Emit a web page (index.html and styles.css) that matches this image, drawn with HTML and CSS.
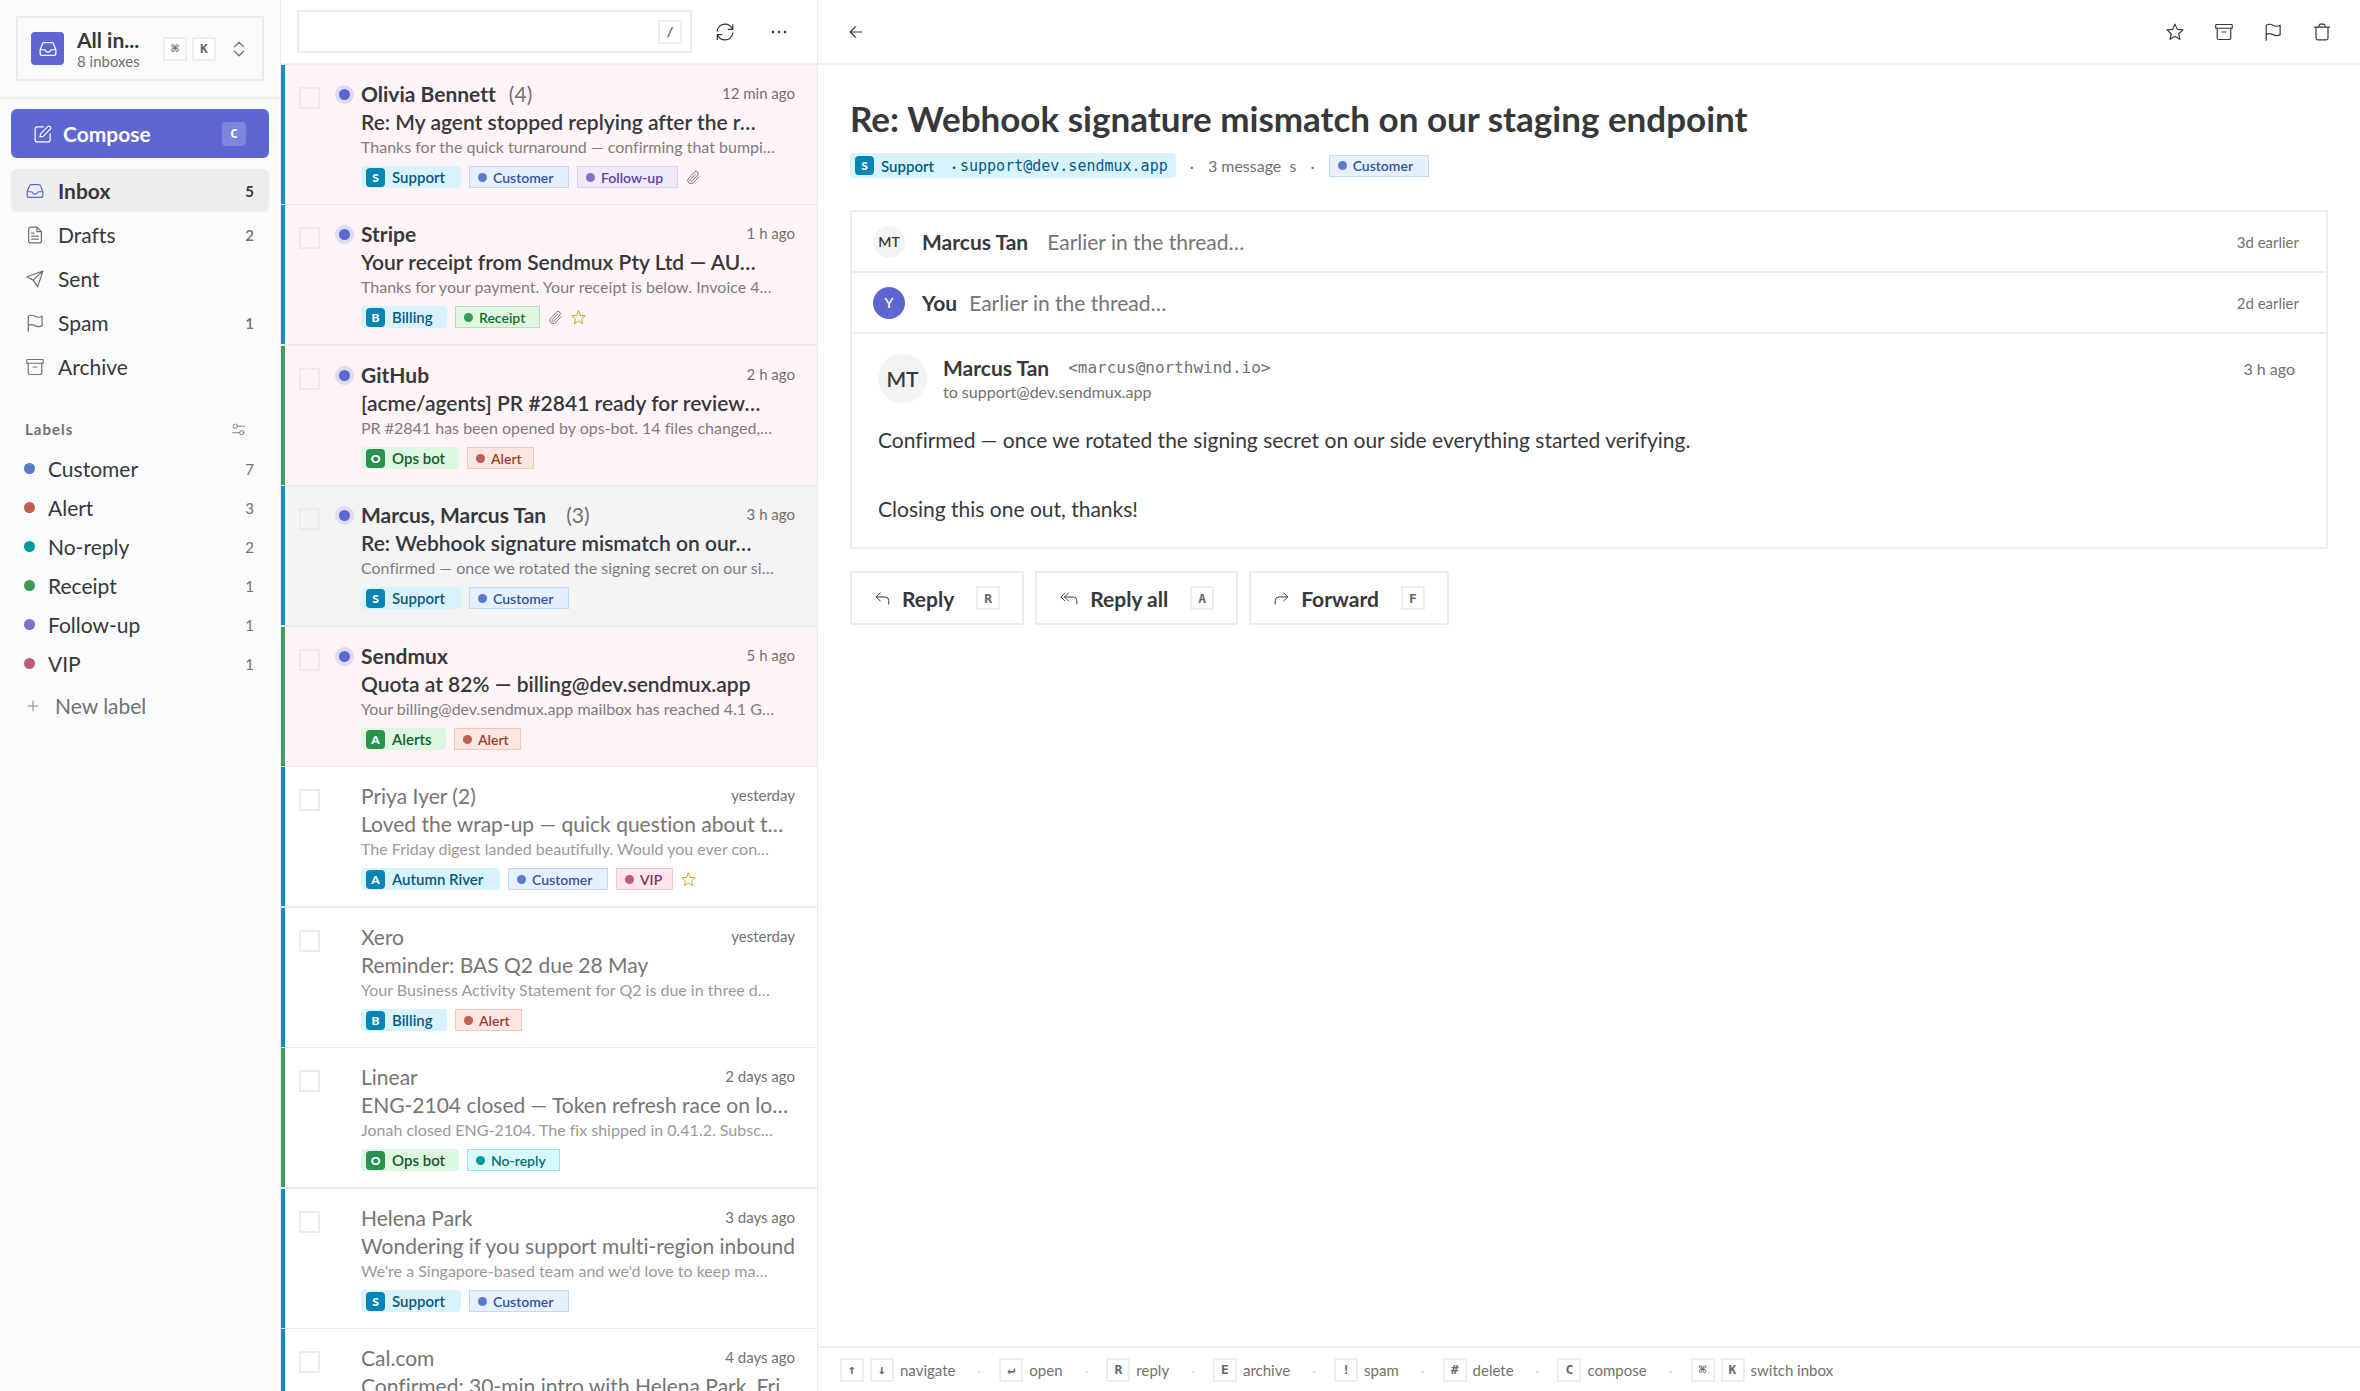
FILE: index.html
```html
<!DOCTYPE html>
<html lang="en">
  <head>
    <meta charset="UTF-8" />
    <meta name="viewport" content="width=device-width, initial-scale=1.0" />
    <title>Inbox - Sendmux</title>
    <link rel="stylesheet" href="styles.css">
  </head>
  <body>
    <!-- Icon sprite -->
    <svg class="sprite" aria-hidden="true">
      <symbol id="i-inbox" viewBox="0 0 24 24"><path d="M1.5 13v4.5a3 3 0 0 0 3 3h15a3 3 0 0 0 3-3V13L19.6 5.600a3 3 0 0 0-2.800-2.100H7.200a3 3 0 0 0-2.800 2.100L1.500 13h5.300a2 2 0 0 1 1.800 1.100c.600 1.300 1.700 2.100 3.400 2.100s2.800-.800 3.400-2.100a2 2 0 0 1 1.800-1.100h5.300" /></symbol>
      <symbol id="i-compose" viewBox="0 0 24 24"><path d="M12.500 2.500H4.500a3 3 0 0 0-3 3v14a3 3 0 0 0 3 3h14a3 3 0 0 0 3-3v-8M8 16l.700-4.200L18.300 2.200a2.300 2.300 0 0 1 3.400 3.400L12.200 15.200z" /></symbol>
      <symbol id="i-file" viewBox="0 0 24 24"><path d="M14.500 1.500h-8a3 3 0 0 0-3 3v15a3 3 0 0 0 3 3h11a3 3 0 0 0 3-3v-12zM14.500 1.500v6h6M7.500 9.500h3M7.500 13.500h9M7.500 17.500h9" /></symbol>
      <symbol id="i-send" viewBox="0 0 24 24"><path d="M22.500 1.500 1 9l8.500 4.500L15.500 22.500zM22.500 1.500l-13 12" /></symbol>
      <symbol id="i-flag" viewBox="0 0 24 24"><path d="M3 23V3c2.500-1.800 5.500-1.800 9 0s6.500 1.800 9.500 0v12.500c-3 1.800-6 1.800-9.500 0s-6.500-1.800-9 0" /></symbol>
      <symbol id="i-archive" viewBox="0 0 24 24"><path d="M2 2h20a1 1 0 0 1 1 1v4H1V3a1 1 0 0 1 1-1zM3 7v12.500a2.500 2.500 0 0 0 2.500 2.500h13a2.500 2.500 0 0 0 2.500-2.500V7M9.500 12h5" /></symbol>
      <symbol id="i-trash" viewBox="0 0 24 24"><path d="M2 5.500h20M4 5.500V20a2.500 2.500 0 0 0 2.500 2.500h11A2.500 2.500 0 0 0 20 20V5.500M7.500 5.500 8.500 2.500a1.500 1.500 0 0 1 1.400-1h4.200a1.500 1.500 0 0 1 1.400 1l1 3" /></symbol>
      <symbol id="i-star" viewBox="0 0 24 24"><path d="m12 1.500 3.100 7 7.600.700-5.700 5.100 1.600 7.500L12 17.900l-6.600 3.900L7 14.300 1.300 9.200l7.600-.700z" /></symbol>
      <symbol id="i-clip" viewBox="0 0 24 24"><path d="m21 10.500-9.300 9.800a5.200 5.200 0 0 1-7.500-7.200l9.400-9.800a3.500 3.500 0 0 1 5.100 4.900l-9.200 9.600a1.800 1.800 0 0 1-2.600-2.500l8.300-8.700" /></symbol>
      <symbol id="i-chevrons" viewBox="0 0 24 24"><path d="m6 9 6-6 6 6M6 15l6 6 6-6" /></symbol>
      <symbol id="i-sliders" viewBox="0 0 24 24"><circle cx="6" cy="6" r="4" /><circle cx="18" cy="18" r="4" /><path d="M10 6h13M1 18h13" /></symbol>
      <symbol id="i-plus" viewBox="0 0 24 24"><path d="M12 2v20M2 12h20" /></symbol>
      <symbol id="i-refresh" viewBox="0 0 24 24"><path d="M1.500 11C2 5.500 6.500 1.500 12 1.500c4.500 0 8 2.500 9.800 6.500M22.300 2v6.500h-6M22.500 13c-.500 5.500-5 9.500-10.500 9.500-4.500 0-8-2.500-9.800-6.500M1.700 22v-6.500h6" /></symbol>
      <symbol id="i-dots" viewBox="0 0 24 24"><circle cx="4" cy="12" r="1" /><circle cx="12" cy="12" r="1" /><circle cx="20" cy="12" r="1" /></symbol>
      <symbol id="i-back" viewBox="0 0 24 24"><path d="M22 12H3M11 3l-9 9 9 9" /></symbol>
      <symbol id="i-reply" viewBox="0 0 24 24"><path d="M8.500 3 2 9.500 8.500 16M2 9.500h14a6 6 0 0 1 6 6V21" /></symbol>
      <symbol id="i-reply-all" viewBox="0 0 30 24"><path d="M8 3 1.500 9.500 8 16M14 3 7.500 9.500 14 16M7.500 9.500H22a6 6 0 0 1 6 6V21" /></symbol>
      <symbol id="i-forward" viewBox="0 0 24 24"><path d="M15.500 3 22 9.500 15.500 16M22 9.500H8a6 6 0 0 0-6 6V21" /></symbol>
    </svg>

    <div class="app">
      <aside class="sidebar">
        <div class="sidebar-header">
          <button class="account">
            <span class="account-logo"><svg class="icon"><use href="#i-inbox" /></svg></span>
            <span class="account-text">
              <span class="account-name">All in...</span>
              <span class="account-sub">8 inboxes</span>
            </span>
            <span class="keys"><kbd>⌘</kbd><kbd>K</kbd></span>
            <svg class="icon"><use href="#i-chevrons" /></svg>
          </button>
        </div>

        <div class="sidebar-body">
          <button class="compose">
            <svg class="icon"><use href="#i-compose" /></svg>
            <span>Compose</span>
            <kbd>C</kbd>
          </button>

          <nav class="folders">
            <a href="#" class="folder active"><svg class="icon"><use href="#i-inbox" /></svg><span>Inbox</span><span class="count">5</span></a>
            <a href="#" class="folder"><svg class="icon"><use href="#i-file" /></svg><span>Drafts</span><span class="count">2</span></a>
            <a href="#" class="folder"><svg class="icon"><use href="#i-send" /></svg><span>Sent</span></a>
            <a href="#" class="folder"><svg class="icon"><use href="#i-flag" /></svg><span>Spam</span><span class="count">1</span></a>
            <a href="#" class="folder"><svg class="icon"><use href="#i-archive" /></svg><span>Archive</span></a>
          </nav>

          <div class="labels-header">
            <h2>Labels</h2>
            <button class="labels-edit" aria-label="Manage labels"><svg class="icon"><use href="#i-sliders" /></svg></button>
          </div>
          <nav class="labels">
            <a href="#" class="label customer"><i class="dot"></i><span>Customer</span><span class="count">7</span></a>
            <a href="#" class="label alert"><i class="dot"></i><span>Alert</span><span class="count">3</span></a>
            <a href="#" class="label no-reply"><i class="dot"></i><span>No-reply</span><span class="count">2</span></a>
            <a href="#" class="label receipt"><i class="dot"></i><span>Receipt</span><span class="count">1</span></a>
            <a href="#" class="label follow-up"><i class="dot"></i><span>Follow-up</span><span class="count">1</span></a>
            <a href="#" class="label vip"><i class="dot"></i><span>VIP</span><span class="count">1</span></a>
          </nav>
          <button class="new-label"><svg class="icon"><use href="#i-plus" /></svg>New label</button>
        </div>
      </aside>

      <section class="list">
        <div class="list-toolbar">
          <div class="search">
            <input type="search" aria-label="Search mail" />
            <kbd>/</kbd>
          </div>
          <button class="icon-btn" aria-label="Refresh"><svg class="icon"><use href="#i-refresh" /></svg></button>
          <button class="icon-btn" aria-label="More"><svg class="icon"><use href="#i-dots" /></svg></button>
        </div>

        <ul class="messages">
          <li class="message unread blue">
            <input type="checkbox" aria-label="Select Olivia Bennett" />
            <i class="unread-dot"></i>
            <div class="message-main">
              <div class="message-top"><span class="sender">Olivia Bennett</span><span class="thread-count">(4)</span><time>12 min ago</time></div>
              <div class="subject">Re: My agent stopped replying after the r…</div>
              <div class="preview">Thanks for the quick turnaround — confirming that bumpi…</div>
              <div class="chips">
                <span class="inbox-chip support"><b>S</b>Support</span>
                <span class="chip customer"><i class="dot"></i>Customer</span>
                <span class="chip follow-up"><i class="dot"></i>Follow-up</span>
                <svg class="icon clip"><use href="#i-clip" /></svg>
              </div>
            </div>
          </li>
          <li class="message unread blue">
            <input type="checkbox" aria-label="Select Stripe" />
            <i class="unread-dot"></i>
            <div class="message-main">
              <div class="message-top"><span class="sender">Stripe</span><time>1 h ago</time></div>
              <div class="subject">Your receipt from Sendmux Pty Ltd — AU…</div>
              <div class="preview">Thanks for your payment. Your receipt is below. Invoice 4…</div>
              <div class="chips">
                <span class="inbox-chip billing"><b>B</b>Billing</span>
                <span class="chip receipt"><i class="dot"></i>Receipt</span>
                <svg class="icon clip"><use href="#i-clip" /></svg>
                <svg class="icon starred"><use href="#i-star" /></svg>
              </div>
            </div>
          </li>
          <li class="message unread green">
            <input type="checkbox" aria-label="Select GitHub" />
            <i class="unread-dot"></i>
            <div class="message-main">
              <div class="message-top"><span class="sender">GitHub</span><time>2 h ago</time></div>
              <div class="subject">[acme/agents] PR #2841 ready for review…</div>
              <div class="preview">PR #2841 has been opened by ops-bot. 14 files changed,…</div>
              <div class="chips">
                <span class="inbox-chip ops-bot"><b>O</b>Ops bot</span>
                <span class="chip alert"><i class="dot"></i>Alert</span>
              </div>
            </div>
          </li>
          <li class="message unread selected blue">
            <input type="checkbox" aria-label="Select Marcus Tan" />
            <i class="unread-dot"></i>
            <div class="message-main">
              <div class="message-top"><span class="sender">Marcus, Marcus Tan</span><span class="thread-count wide">(3)</span><time>3 h ago</time></div>
              <div class="subject">Re: Webhook signature mismatch on our…</div>
              <div class="preview">Confirmed — once we rotated the signing secret on our si…</div>
              <div class="chips">
                <span class="inbox-chip support"><b>S</b>Support</span>
                <span class="chip customer"><i class="dot"></i>Customer</span>
              </div>
            </div>
          </li>
          <li class="message unread green">
            <input type="checkbox" aria-label="Select Sendmux" />
            <i class="unread-dot"></i>
            <div class="message-main">
              <div class="message-top"><span class="sender">Sendmux</span><time>5 h ago</time></div>
              <div class="subject">Quota at 82% — billing@dev.sendmux.app</div>
              <div class="preview">Your billing@dev.sendmux.app mailbox has reached 4.1 G…</div>
              <div class="chips">
                <span class="inbox-chip alerts"><b>A</b>Alerts</span>
                <span class="chip alert"><i class="dot"></i>Alert</span>
              </div>
            </div>
          </li>
          <li class="message blue">
            <input type="checkbox" aria-label="Select Priya Iyer" />
            <div class="message-main">
              <div class="message-top"><span class="sender">Priya Iyer (2)</span><time>yesterday</time></div>
              <div class="subject">Loved the wrap-up — quick question about t…</div>
              <div class="preview">The Friday digest landed beautifully. Would you ever con…</div>
              <div class="chips">
                <span class="inbox-chip autumn"><b>A</b>Autumn River</span>
                <span class="chip customer"><i class="dot"></i>Customer</span>
                <span class="chip vip"><i class="dot"></i>VIP</span>
                <svg class="icon starred"><use href="#i-star" /></svg>
              </div>
            </div>
          </li>
          <li class="message blue">
            <input type="checkbox" aria-label="Select Xero" />
            <div class="message-main">
              <div class="message-top"><span class="sender">Xero</span><time>yesterday</time></div>
              <div class="subject">Reminder: BAS Q2 due 28 May</div>
              <div class="preview">Your Business Activity Statement for Q2 is due in three d…</div>
              <div class="chips">
                <span class="inbox-chip billing"><b>B</b>Billing</span>
                <span class="chip alert"><i class="dot"></i>Alert</span>
              </div>
            </div>
          </li>
          <li class="message green">
            <input type="checkbox" aria-label="Select Linear" />
            <div class="message-main">
              <div class="message-top"><span class="sender">Linear</span><time>2 days ago</time></div>
              <div class="subject">ENG-2104 closed — Token refresh race on lo…</div>
              <div class="preview">Jonah closed ENG-2104. The fix shipped in 0.41.2. Subsc…</div>
              <div class="chips">
                <span class="inbox-chip ops-bot"><b>O</b>Ops bot</span>
                <span class="chip no-reply"><i class="dot"></i>No-reply</span>
              </div>
            </div>
          </li>
          <li class="message blue">
            <input type="checkbox" aria-label="Select Helena Park" />
            <div class="message-main">
              <div class="message-top"><span class="sender">Helena Park</span><time>3 days ago</time></div>
              <div class="subject">Wondering if you support multi-region inbound</div>
              <div class="preview">We're a Singapore-based team and we'd love to keep ma…</div>
              <div class="chips">
                <span class="inbox-chip support"><b>S</b>Support</span>
                <span class="chip customer"><i class="dot"></i>Customer</span>
              </div>
            </div>
          </li>
          <li class="message blue">
            <input type="checkbox" aria-label="Select Cal.com" />
            <div class="message-main">
              <div class="message-top"><span class="sender">Cal.com</span><time>4 days ago</time></div>
              <div class="subject">Confirmed: 30-min intro with Helena Park, Fri</div>
            </div>
          </li>
        </ul>
      </section>

      <main class="reader">
        <div class="reader-toolbar">
          <button class="icon-btn" aria-label="Back"><svg class="icon back"><use href="#i-back" /></svg></button>
          <div class="reader-actions">
            <button class="icon-btn" aria-label="Star"><svg class="icon"><use href="#i-star" /></svg></button>
            <button class="icon-btn" aria-label="Archive"><svg class="icon"><use href="#i-archive" /></svg></button>
            <button class="icon-btn" aria-label="Mark as spam"><svg class="icon"><use href="#i-flag" /></svg></button>
            <button class="icon-btn" aria-label="Delete"><svg class="icon"><use href="#i-trash" /></svg></button>
          </div>
        </div>

        <div class="reader-body">
          <h1>Re: Webhook signature mismatch on our staging endpoint</h1>
          <div class="meta">
            <span class="inbox-chip address"><b>S</b>Support<span class="sep">·</span><span class="mono">support@dev.sendmux.app</span></span>
            <span>·</span>
            <span class="total">3 message&nbsp; s</span>
            <span>·</span>
            <span class="chip customer"><i class="dot"></i>Customer</span>
          </div>

          <div class="thread">
            <div class="thread-row">
              <span class="avatar">MT</span>
              <span class="name">Marcus Tan</span>
              <span class="snippet">Earlier in the thread…</span>
              <time>3d earlier</time>
            </div>
            <div class="thread-row">
              <span class="avatar you">Y</span>
              <span class="name short">You</span>
              <span class="snippet">Earlier in the thread…</span>
              <time>2d earlier</time>
            </div>
            <article class="open-message">
              <header>
                <span class="avatar large">MT</span>
                <div class="from">
                  <div class="from-line"><span class="name">Marcus Tan</span><span class="mono">&lt;marcus@northwind.io&gt;</span></div>
                  <div class="to">to support@dev.sendmux.app</div>
                </div>
                <time>3 h ago</time>
              </header>
              <p>Confirmed — once we rotated the signing secret on our side everything started verifying.</p>
              <p>Closing this one out, thanks!</p>
            </article>
          </div>

          <div class="replies">
            <button class="reply-btn"><svg class="icon"><use href="#i-reply" /></svg><span>Reply</span><kbd>R</kbd></button>
            <button class="reply-btn"><svg class="icon wide"><use href="#i-reply-all" /></svg><span>Reply all</span><kbd>A</kbd></button>
            <button class="reply-btn"><svg class="icon"><use href="#i-forward" /></svg><span>Forward</span><kbd>F</kbd></button>
          </div>
        </div>

        <footer class="shortcuts">
          <span class="shortcut"><kbd>↑</kbd><kbd>↓</kbd>navigate</span><i>·</i>
          <span class="shortcut"><kbd>↵</kbd>open</span><i>·</i>
          <span class="shortcut"><kbd>R</kbd>reply</span><i>·</i>
          <span class="shortcut"><kbd>E</kbd>archive</span><i>·</i>
          <span class="shortcut"><kbd>!</kbd>spam</span><i>·</i>
          <span class="shortcut"><kbd>#</kbd>delete</span><i>·</i>
          <span class="shortcut"><kbd>C</kbd>compose</span><i>·</i>
          <span class="shortcut"><kbd>⌘</kbd><kbd>K</kbd>switch inbox</span>
        </footer>
      </main>
    </div>
  </body>
</html>
```
FILE: styles.css
```css
:root {
  --accent: #5e67d1;
  --text: #37383a;
  --muted: #73706f;
  --line: #ebebeb;
  --blue: #0a93bb;
  --green: #3f9e5e;
}
* {
  box-sizing: border-box;
}
body {
  margin: 0;
  font-family: Lato, sans-serif;
  font-size: 21px;
  font-variant-ligatures: none;
  color: var(--text);
  background-color: #fff;
}
button,
input {
  font: inherit;
  color: inherit;
}
button {
  border: none;
  background: none;
  padding: 0;
  cursor: pointer;
}
a {
  color: inherit;
  text-decoration: none;
}
.sprite {
  display: none;
}
.icon {
  width: 18px;
  height: 18px;
  fill: none;
  stroke: currentColor;
  stroke-width: 1.6;
  stroke-linecap: round;
  stroke-linejoin: round;
  flex-shrink: 0;
}
kbd {
  display: inline-flex;
  align-items: center;
  justify-content: center;
  width: 24px;
  height: 24px;
  flex-shrink: 0;
  border: 2px solid #eeeeee;
  background-color: #fff;
  color: #666;
  font-family: "DejaVu Sans Mono", monospace;
  font-size: 13px;
  font-weight: 700;
}
.mono {
  font-family: "DejaVu Sans Mono", monospace;
}
.app {
  display: grid;
  grid-template-columns: 281px 537px 1fr;
  height: 100vh;
  overflow: hidden;
}

/* Sidebar */
.sidebar {
  background-color: #fafbfd;
  border-right: 1px solid var(--line);
}
.sidebar-header {
  padding: 16px;
  border-bottom: 2px solid #efefef;
}
.account {
  display: flex;
  align-items: center;
  width: 100%;
  height: 65px;
  padding: 0 14px 0 13px;
  border: 2px solid #ececec;
  text-align: left;
}
.account-logo {
  display: flex;
  align-items: center;
  justify-content: center;
  width: 33px;
  height: 33px;
  border-radius: 4px;
  background-color: var(--accent);
  color: #fff;
}
.account-text {
  flex: 1;
  display: flex;
  flex-direction: column;
  padding-left: 13px;
  white-space: nowrap;
}
.account-name {
  font-weight: 700;
  line-height: 24px;
}
.account-sub {
  font-size: 15px;
  line-height: 18px;
  color: var(--muted);
}
.keys {
  display: flex;
  gap: 5px;
  padding-right: 14px;
}
.account > .icon {
  color: var(--muted);
}
.sidebar-body {
  padding: 10px 11px;
}
.compose {
  display: flex;
  align-items: center;
  width: 100%;
  height: 49px;
  padding: 0 23px;
  border-radius: 6px;
  background-color: var(--accent);
  color: #fff;
  font-weight: 700;
}
.compose span {
  flex: 1;
  padding-left: 11px;
  text-align: left;
}
.compose kbd {
  border: none;
  border-radius: 4px;
  background-color: rgba(255, 255, 255, 0.2);
  color: #fff;
}
.folders {
  display: flex;
  flex-direction: column;
  gap: 1px;
  margin-top: 11px;
}
.folder {
  display: flex;
  align-items: center;
  height: 43px;
  padding: 0 15px;
  border-radius: 6px;
}
.folder span:nth-child(2) {
  flex: 1;
  padding-left: 14px;
}
.folder .icon {
  color: var(--muted);
}
.folder.active {
  background-color: #eeeeee;
  font-weight: 700;
}
.folder.active .icon {
  color: var(--accent);
}
.count {
  font-size: 15px;
  color: var(--muted);
}
.folder .count {
  font-weight: 600;
}
.folder.active .count {
  color: var(--text);
  font-weight: 700;
}
.labels-header {
  display: flex;
  align-items: center;
  justify-content: space-between;
  margin-top: 31px;
  padding: 0 24px 0 14px;
  color: var(--muted);
}
.labels-header h2 {
  margin: 0;
  font-size: 15px;
  line-height: 20px;
  font-weight: 700;
  letter-spacing: 1px;
}
.labels-edit {
  display: flex;
}
.labels-edit .icon {
  width: 13px;
  height: 13px;
}
.labels {
  margin-top: 10px;
}
.label {
  display: flex;
  align-items: center;
  height: 39px;
  padding: 0 15px 0 13px;
}
.label span:nth-child(2) {
  flex: 1;
  padding-left: 13px;
}
.dot {
  width: 9px;
  height: 9px;
  border-radius: 50%;
  flex-shrink: 0;
}
.label .dot {
  width: 11px;
  height: 11px;
}
.customer .dot {
  background-color: #5b7ace;
}
.alert .dot {
  background-color: #c05e51;
}
.no-reply .dot {
  background-color: #05999b;
}
.receipt .dot {
  background-color: #3d9658;
}
.follow-up .dot {
  background-color: #7f71c8;
}
.vip .dot {
  background-color: #bb5b80;
}
.new-label {
  display: flex;
  align-items: center;
  gap: 16px;
  height: 45px;
  padding: 0 16px;
  color: var(--muted);
}
.new-label .icon {
  width: 12px;
  height: 12px;
}

/* Message list */
.list {
  display: flex;
  flex-direction: column;
  overflow: hidden;
  border-right: 1px solid var(--line);
}
.list-toolbar {
  display: flex;
  align-items: center;
  flex-shrink: 0;
  height: 65px;
  padding: 0 11px 0 16px;
  border-bottom: 2px solid #efefef;
}
.search {
  display: flex;
  align-items: center;
  flex: 1;
  height: 43px;
  margin-right: 6px;
  padding-right: 8px;
  border: 2px solid #ececec;
}
.search input {
  flex: 1;
  min-width: 0;
  border: none;
  outline: none;
  background: none;
}
.icon-btn {
  display: flex;
  align-items: center;
  justify-content: center;
  width: 54px;
  height: 43px;
}
#i-dots circle {
  fill: currentColor;
}
.messages {
  margin: 0;
  padding: 0;
  list-style: none;
}
.message {
  display: grid;
  grid-template-columns: 36px 26px 1fr;
  height: 140px;
  padding: 15px 22px 0 18px;
  border-bottom: 1px solid var(--line);
}
.message:nth-child(even) {
  height: 141px;
  border-bottom-width: 2px;
}
.message.blue {
  box-shadow: inset 4px 0 var(--blue);
}
.message.green {
  box-shadow: inset 4px 0 var(--green);
}
.message.unread {
  background-color: #fff5f8;
}
.message.selected {
  background-color: #f4f4f4;
}
.message input {
  appearance: none;
  width: 21px;
  height: 22px;
  margin: 7px 0 0;
  border: 2px solid #ececec;
}
.unread-dot {
  width: 19px;
  height: 19px;
  margin-top: 5px;
  border: 4px solid #dfdbf3;
  border-radius: 50%;
  background-color: var(--accent);
}
.message-main {
  grid-column: 3;
  min-width: 0;
  color: #777472;
  white-space: nowrap;
}
.message-top {
  display: flex;
  align-items: center;
  line-height: 27px;
}
.message-top time {
  margin-left: auto;
  font-size: 15px;
  color: var(--muted);
}
.thread-count {
  padding-left: 13px;
  color: var(--muted);
}
.thread-count.wide {
  padding-left: 20px;
}
.subject {
  line-height: 29px;
}
.preview {
  font-size: 16px;
  line-height: 22px;
  color: #9c9997;
}
.unread .sender {
  color: var(--text);
  font-weight: 700;
}
.unread .subject {
  color: var(--text);
  font-weight: 600;
}
.unread .preview {
  color: #7f7b7b;
}
.chips {
  display: flex;
  align-items: center;
  gap: 8px;
  margin-top: 8px;
}
.inbox-chip,
.chip {
  display: inline-flex;
  align-items: center;
  height: 22px;
  font-size: 14px;
}
.inbox-chip {
  padding-left: 5px;
  border-radius: 4px;
  background-color: #d8f3fe;
  color: #075a7d;
  font-size: 15px;
  font-weight: 600;
}
.inbox-chip b {
  display: flex;
  align-items: center;
  justify-content: center;
  width: 19px;
  height: 19px;
  margin-right: 7px;
  border-radius: 4px;
  background-color: #0785b4;
  color: #fff;
  font-size: 12px;
}
.support {
  width: 100px;
}
.billing {
  width: 86px;
}
.autumn {
  width: 139px;
}
.ops-bot {
  width: 98px;
}
.alerts {
  width: 85px;
}
.ops-bot,
.alerts {
  background-color: #def7e2;
  color: #0e5c2c;
}
.ops-bot b,
.alerts b {
  background-color: #2b914e;
}
.chip {
  gap: 6px;
  padding-left: 8px;
  border: 1px solid;
  font-weight: 600;
}
.chip.customer {
  width: 100px;
  background-color: #e6f0fe;
  border-color: #c4d7f8;
  color: #3553a0;
}
.chip.follow-up {
  width: 101px;
  background-color: #efebfd;
  border-color: #d8d1f8;
  color: #57449f;
}
.chip.receipt {
  width: 85px;
  background-color: #dff7e1;
  border-color: #b5dfbd;
  color: #156e35;
}
.chip.alert {
  width: 67px;
  background-color: #ffe7e1;
  border-color: #f6c5bb;
  color: #963c33;
}
.chip.vip {
  width: 57px;
  background-color: #ffe5ee;
  border-color: #f3c6d6;
  color: #8c2d55;
}
.chip.no-reply {
  width: 93px;
  background-color: #d7fafa;
  border-color: #a5e3e3;
  color: #086f72;
}
.chips .icon {
  width: 15px;
  height: 15px;
}
.clip {
  color: #807b7b;
}
.starred {
  color: #d3a21f;
}

/* Reading pane */
.reader {
  display: flex;
  flex-direction: column;
  min-width: 0;
}
.reader-toolbar {
  display: flex;
  align-items: center;
  justify-content: space-between;
  height: 65px;
  padding: 0 14px 0 11px;
  border-bottom: 2px solid #efefef;
}
.reader-actions {
  display: flex;
}
.reader-actions .icon-btn {
  width: 49px;
}
.icon.back {
  width: 14px;
  height: 14px;
  stroke-width: 2;
}
.reader-body {
  flex: 1;
  padding: 30px 32px 32px;
}
h1 {
  margin: 0;
  font-size: 35px;
  line-height: 46px;
  font-weight: 700;
}
.meta {
  display: flex;
  align-items: center;
  gap: 14px;
  margin-top: 12px;
  font-size: 16px;
  color: var(--muted);
}
.inbox-chip.address {
  width: auto;
  height: 25px;
  padding-right: 8px;
}
.address .mono {
  font-size: 15px;
  font-weight: 400;
}
.address .sep {
  padding: 0 4px 0 18px;
}
.thread {
  margin-top: 32px;
  border: 2px solid #ededed;
}
.thread-row {
  display: flex;
  align-items: center;
  height: 61px;
  padding: 0 27px 0 21px;
  border-bottom: 2px solid #ededed;
}
.avatar {
  display: flex;
  align-items: center;
  justify-content: center;
  width: 32px;
  height: 32px;
  margin-right: 17px;
  border-radius: 50%;
  background-color: #f4f4f4;
  font-size: 14px;
  font-weight: 600;
}
.avatar.you {
  background-color: var(--accent);
  color: #fff;
}
.avatar.large {
  width: 49px;
  height: 49px;
  margin-right: 16px;
  font-size: 21px;
}
.name {
  padding-right: 19px;
  font-weight: 700;
}
.name.short {
  padding-right: 12px;
}
.snippet {
  color: #777472;
}
.thread time {
  margin-left: auto;
  font-size: 15px;
  color: var(--muted);
}
.open-message {
  padding: 20px 31px 21px 26px;
}
.open-message header {
  display: flex;
  align-items: flex-start;
  height: 68px;
}
.from-line {
  display: flex;
  align-items: center;
  line-height: 27px;
}
.from-line .mono {
  font-size: 16px;
  color: var(--muted);
}
.to {
  font-size: 16px;
  line-height: 22px;
  color: var(--muted);
}
.open-message time {
  font-size: 16px;
  line-height: 30px;
}
.open-message p {
  margin: 0;
  line-height: 35px;
}
.open-message p + p {
  margin-top: 34px;
}
.replies {
  display: flex;
  gap: 11px;
  margin-top: 22px;
}
.reply-btn {
  display: flex;
  align-items: center;
  height: 54px;
  padding: 0 22px 0 23px;
  border: 2px solid #ececec;
  font-weight: 700;
}
.reply-btn span {
  padding: 0 22px 0 12px;
}
.reply-btn .icon {
  width: 15px;
  height: 15px;
}
.reply-btn .icon.wide {
  width: 18px;
}
.shortcuts {
  display: flex;
  align-items: center;
  height: 45px;
  padding: 0 22px;
  border-top: 2px solid #efefef;
  font-size: 15px;
  color: var(--muted);
}
.shortcuts i {
  margin: 0 18px 0 22px;
  color: #ddd;
}
.shortcut {
  display: flex;
  align-items: center;
  gap: 6px;
}
```
